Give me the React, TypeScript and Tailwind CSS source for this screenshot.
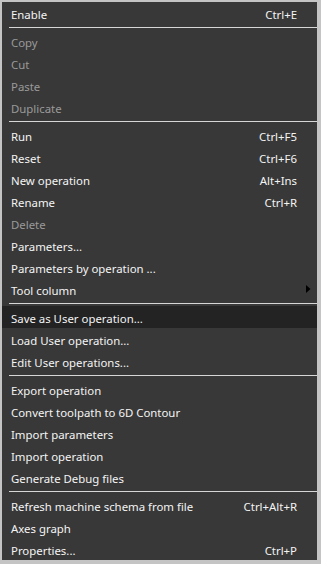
type Item =
  | { kind: "sep" }
  | {
      kind: "item";
      label: string;
      shortcut?: string;
      disabled?: boolean;
      active?: boolean;
      submenu?: boolean;
    };

const ITEMS: Item[] = [
  { kind: "item", label: "Enable", shortcut: "Ctrl+E" },
  { kind: "sep" },
  { kind: "item", label: "Copy", disabled: true },
  { kind: "item", label: "Cut", disabled: true },
  { kind: "item", label: "Paste", disabled: true },
  { kind: "item", label: "Duplicate", disabled: true },
  { kind: "sep" },
  { kind: "item", label: "Run", shortcut: "Ctrl+F5" },
  { kind: "item", label: "Reset", shortcut: "Ctrl+F6" },
  { kind: "item", label: "New operation", shortcut: "Alt+Ins" },
  { kind: "item", label: "Rename", shortcut: "Ctrl+R" },
  { kind: "item", label: "Delete", disabled: true },
  { kind: "item", label: "Parameters..." },
  { kind: "item", label: "Parameters by operation ..." },
  { kind: "item", label: "Tool column", submenu: true },
  { kind: "sep" },
  { kind: "item", label: "Save as User operation...", active: true },
  { kind: "item", label: "Load User operation..." },
  { kind: "item", label: "Edit User operations..." },
  { kind: "sep" },
  { kind: "item", label: "Export operation" },
  { kind: "item", label: "Convert toolpath to 6D Contour" },
  { kind: "item", label: "Import parameters" },
  { kind: "item", label: "Import operation" },
  { kind: "item", label: "Generate Debug files" },
  { kind: "sep" },
  { kind: "item", label: "Refresh machine schema from file", shortcut: "Ctrl+Alt+R" },
  { kind: "item", label: "Axes graph" },
  { kind: "item", label: "Properties...", shortcut: "Ctrl+P" },
];

function MenuRow({ item }: { item: Extract<Item, { kind: "item" }> }) {
  return (
    <div
      className={
        "relative flex h-[22px] items-center justify-between pl-[9px] pr-[20px] pt-[3px] " +
        (item.active ? "bg-[#232323] " : "") +
        (item.disabled ? "text-[#9a9a9a]" : "text-[#f4f4f4]")
      }
    >
      <span>{item.label}</span>
      {item.shortcut && <span>{item.shortcut}</span>}
      {item.submenu && (
        <svg
          className="absolute right-[6px] top-[7px]"
          width="5"
          height="8"
          viewBox="0 0 5 8"
        >
          <path d="M0 0 L4.5 4 L0 8 Z" fill="#000" />
        </svg>
      )}
    </div>
  );
}

export default function App() {
  return (
    <div className="h-[564px] w-[321px] bg-[#c4c4c4] pb-[4px] pl-[2px] pr-[4px] pt-[2px]">
      <div
        className="h-full bg-[#383838] text-[11.4px]"
        style={{ fontFamily: '"Noto Sans", "Open Sans", sans-serif' }}
      >
        {ITEMS.map((item, i) =>
          item.kind === "sep" ? (
            <div key={i} className="h-[6px] pt-[3px]">
              <div className="ml-[7px] h-px bg-[#d6d6d6]" />
            </div>
          ) : (
            <MenuRow key={i} item={item} />
          ),
        )}
      </div>
    </div>
  );
}
